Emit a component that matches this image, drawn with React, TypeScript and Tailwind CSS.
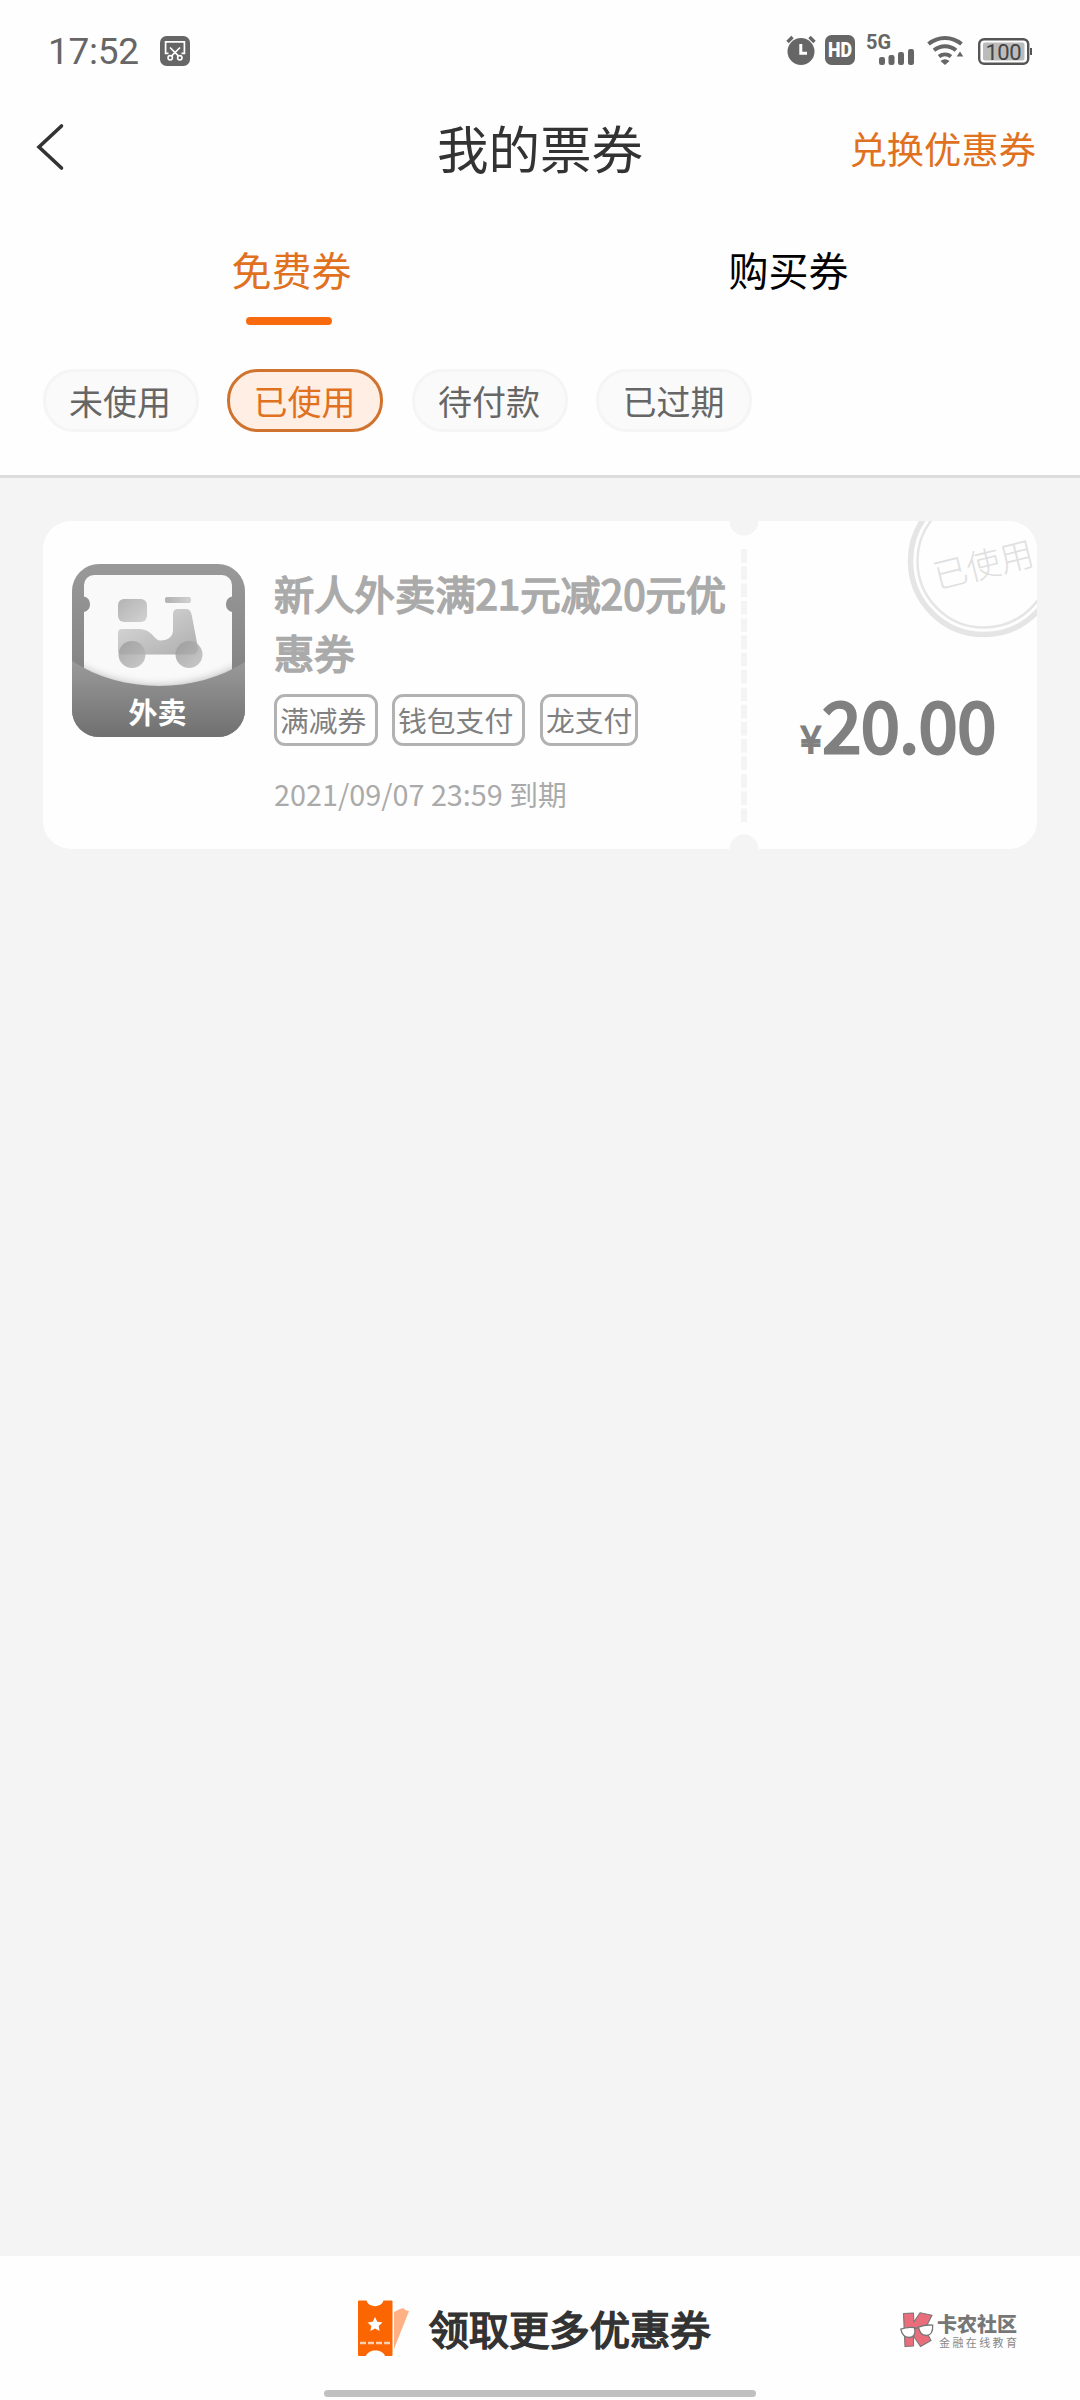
const chips = ["未使用", "已使用", "待付款", "已过期"];

function ScissorsBadge() {
  return (
    <svg width="30" height="30" viewBox="0 0 30 30" fill="none">
      <rect width="30" height="30" rx="6.5" fill="#666" />
      <path d="M8.500 17.300H5.600V5.900h18.800v11.400h-2.900" stroke="#fff" strokeWidth="1.700" />
      <path d="M10 11.500l8.600 8.600M20 11.500l-8.600 8.600" stroke="#fff" strokeWidth="1.700" />
      <circle cx="10.200" cy="21.800" r="2.200" stroke="#fff" strokeWidth="1.600" />
      <circle cx="19.800" cy="21.800" r="2.200" stroke="#fff" strokeWidth="1.600" />
    </svg>
  );
}

function StatusIcons() {
  return (
    <svg width="248" height="60" viewBox="785 22 248 60" fill="#666">
      <circle cx="801" cy="52.500" r="13.500" />
      <path d="M787.500 43l5-5M809.500 38l5 5" stroke="#666" strokeWidth="3.400" />
      <path d="M800.800 45v9.300h6.200" stroke="#fff" strokeWidth="3" fill="none" />
      <rect x="825" y="36" width="30" height="30" rx="6.500" />
      <text x="840" y="58" textAnchor="middle" fill="#fff" fontFamily="Roboto" fontWeight="900" fontSize="20" textLength="24" lengthAdjust="spacingAndGlyphs">HD</text>
      <text x="866" y="50.200" fontFamily="Roboto" fontWeight="700" fontSize="19.500" textLength="25" lengthAdjust="spacingAndGlyphs">5G</text>
      <rect x="879" y="58" width="6" height="8" rx="2.200" />
      <rect x="888.500" y="56" width="6" height="10" rx="2.200" />
      <rect x="898" y="53" width="6" height="13" rx="2.200" />
      <rect x="908" y="50" width="6" height="16" rx="2.200" />
      <g fill="none" stroke="#666" strokeWidth="4">
        <path d="M928.500 45a25.500 25.500 0 0 1 33 0" />
        <path d="M934 51.300a17 17 0 0 1 22 0" />
        <path d="M939 57.500a10 10 0 0 1 12 0" />
      </g>
      <path d="M940.500 62q4.500-3.600 9 0l-4.500 4z" />
      <path d="M960 52.500l3.300 5h-6.600z" />
      <rect x="979.200" y="40.200" width="49" height="24.600" rx="5" fill="#fff" stroke="#555" strokeWidth="2.400" />
      <rect x="983" y="43.500" width="41.500" height="18" rx="2" fill="#bbb" />
      <path d="M1030 49h2v7h-2z" fill="#555" />
      <text x="1003.500" y="60.500" textAnchor="middle" fill="#444" fontFamily="Roboto" fontSize="22" textLength="36" lengthAdjust="spacing">100</text>
    </svg>
  );
}

function TakeawayIcon() {
  return (
    <svg className="shrink-0" width="173" height="173" viewBox="0 0 173 173">
      <defs>
        <clipPath id="tile"><rect width="173" height="173" rx="27" /></clipPath>
        <linearGradient id="back" x1="0" y1="0" x2="0" y2="1">
          <stop offset="0" stopColor="#999" /><stop offset="0.6" stopColor="#858585" />
        </linearGradient>
        <linearGradient id="front" x1="0" y1="0" x2="0" y2="1">
          <stop offset="0" stopColor="#9a9a9a" /><stop offset="1" stopColor="#707070" />
        </linearGradient>
        <linearGradient id="part" x1="0" y1="0" x2="1" y2="1">
          <stop offset="0" stopColor="#b3b3b3" /><stop offset="1" stopColor="#d2d2d2" />
        </linearGradient>
        <linearGradient id="bar" x1="0" y1="0" x2="1" y2="0">
          <stop offset="0" stopColor="#b0b0b0" /><stop offset="1" stopColor="#d2d2d2" />
        </linearGradient>
        <linearGradient id="body" x1="0" y1="0" x2="1" y2="1">
          <stop offset="0" stopColor="#dcdcdc" /><stop offset="0.9" stopColor="#b2b2b2" />
        </linearGradient>
        <linearGradient id="wheel" x1="0" y1="0" x2="1" y2="1">
          <stop offset="0" stopColor="#999" /><stop offset="1" stopColor="#bdbdbd" />
        </linearGradient>
        <filter id="soft" x="-20%" y="-20%" width="140%" height="140%"><feGaussianBlur stdDeviation="4" /></filter>
      </defs>
      <g clipPath="url(#tile)">
        <rect width="173" height="173" fill="url(#back)" />
        <path d="M22 11H150a10 10 0 0 1 10 10V32.500a8 8 0 0 0 0 15.500V140H12V48a8 8 0 0 0 0-15.500V21a10 10 0 0 1 10-10z" fill="#f9f9f9" />
        <path d="M-2 98Q86 146 175 98V180H-2z" fill="#888" opacity="0.6" filter="url(#soft)" />
        <path d="M0 97C50 130 123 130 173 98V173H0z" fill="url(#front)" />
        <rect x="46" y="35" width="29" height="23" rx="6" fill="url(#part)" />
        <rect x="93" y="33" width="26" height="6" rx="2" fill="url(#bar)" />
        <path d="M50 65H66C77 65 80 71 84.500 75Q86 76.500 88 76.500C97 76.500 101 72 101 66V50Q101 45 106 45H114Q118 45 119.500 50L126 84Q126 90 120 90.500H51Q46 90.500 46 86V69Q46 65 50 65z" fill="url(#body)" />
        <g fill="url(#wheel)" opacity="0.8">
          <circle cx="60" cy="90.500" r="13.500" />
          <circle cx="117" cy="90.500" r="13.500" />
        </g>
      </g>
      <text x="85.500" y="159.500" textAnchor="middle" fill="#fff" fontFamily="Noto Sans CJK SC" fontWeight="700" fontSize="29">外卖</text>
    </svg>
  );
}

function UsedStamp() {
  return (
    <svg className="absolute top-0 right-0" width="135" height="120" viewBox="902 521 135 120">
      <g fill="none" stroke="#e5e5e5">
        <circle cx="984" cy="561" r="73.500" strokeWidth="5.500" />
        <circle cx="984" cy="561" r="66.500" strokeWidth="2.500" />
      </g>
      <text x="983.500" y="577" textAnchor="middle" fill="#e0e0e0" fontFamily="Noto Sans CJK SC" fontWeight="300" fontSize="34" transform="rotate(-14 984 565)">已使用</text>
    </svg>
  );
}

function TicketIcon() {
  return (
    <svg width="52" height="58" viewBox="359 2299 52 58">
      <path d="M395 2312l6-3q5-2 5 1l4 1-15 38z" fill="#ffb084" />
      <path d="M360 2300.500h7.500c2 7.500 15 7.500 17 0h8q1 0 1 1v53.500q0 1-1 1H386c-2-7.500-17-7.500-19 0h-7q-1 0-1-1v-53.500q0-1 1-1z" fill="#fb6602" />
      <path d="M376 2317l2.300 4.700 5.200.7-3.800 3.600.9 5.100-4.600-2.500-4.600 2.500.9-5.100-3.800-3.600 5.200-.7z" fill="#fff" />
      <path d="M361 2343h30" stroke="#ffd0b0" strokeWidth="2.500" strokeDasharray="6 2" />
    </svg>
  );
}

function CommunityLogo() {
  return (
    <div className="flex items-center">
      <svg width="35" height="37" viewBox="0 0 35 37">
        <path d="M3.500 1.500L13.500 1l.3 9L20 .8l12 2.400-7 13.800 6 11.500-10.500 6-7-10.500v10L5 34.500z" fill="#ea6d7c" stroke="#777" strokeWidth="1.100" strokeLinejoin="round" />
        <g fill="#fff" stroke="#777" strokeWidth="1.300">
          <path d="M.8 17.200q7-2.800 13.700-1.500 2 9.500-5.500 9.800-6.500 0-8.200-8.300z" />
          <path d="M18.500 15.200q7-2.800 14.200-2 .5 10-6.200 10.300-6.500.2-8-8.300z" />
        </g>
        <path d="M14.500 16.500l4-.8" stroke="#777" strokeWidth="1.300" />
      </svg>
      <div className="ml-[2px] flex flex-col">
        <span className="text-[20px] leading-[20px] font-black text-[#777]">卡农社区</span>
        <span className="mt-[3px] ml-[2px] text-[11px] leading-[11px] tracking-[2.400px] text-[#888]">金融在线教育</span>
      </div>
    </div>
  );
}

export default function App() {
  return (
    <div className="flex h-[2400px] w-[1080px] flex-col overflow-hidden bg-[#f4f4f4] font-['Noto_Sans_CJK_SC',sans-serif] whitespace-nowrap">
      <header className="flex h-[478px] shrink-0 flex-col border-b-[3px] border-[#dcdcdc] bg-[#fefefe]">
        <div className="flex h-[102px] shrink-0 items-center pr-[47px] pl-[48px]">
          <span className="pt-[1px] font-['Roboto',sans-serif] text-[37px] tracking-[-0.300px] text-[#666]">17:52</span>
          <div className="mr-auto ml-[21px]"><ScissorsBadge /></div>
          <StatusIcons />
        </div>
        <div className="grid h-[96px] shrink-0 grid-cols-3 items-center px-[36px]">
          <svg width="30" height="48" viewBox="0 0 30 48" fill="none" stroke="#333" strokeWidth="3.600" strokeLinecap="round" className="-mt-[6px]">
            <path d="M25.500 3L3 24l22.500 21" />
          </svg>
          <h1 className="-mt-[6px] text-center text-[51.500px] text-[#333]">我的票券</h1>
          <a className="-mt-[3px] pr-[8px] text-right text-[37.300px] text-[#e0711f]">兑换优惠券</a>
        </div>
        <nav className="mt-[38px] grid grid-cols-2 px-[43px] text-center text-[40px] leading-[66px]">
          <div className="flex flex-col items-center text-[#e0711f]">
            <span>免费券</span>
            <i className="mt-[15px] mr-[5px] h-[8px] w-[86px] rounded-[4px] bg-[#f96a0e]" />
          </div>
          <span className="text-black">购买券</span>
        </nav>
        <div className="mt-[44px] flex gap-[28.500px] pl-[42.500px]">
          {chips.map((label, i) => (
            <button
              key={label}
              className={
                i === 1
                  ? "h-[63px] w-[156px] rounded-[31px] border-[3px] border-[#d0732f] bg-[#ffeee4] pr-[1px] text-[34px] leading-[58px] text-[#e0711f]"
                  : "h-[63px] w-[156px] rounded-[31px] border-[3px] border-[#f5f5f5] bg-[#fafafa] pr-[1px] text-[34px] leading-[58px] text-[#666]"
              }
            >
              {label}
            </button>
          ))}
        </div>
      </header>

      <main className="flex-1 px-[43px] pt-[43px]">
        <article className="relative flex h-[328px] overflow-hidden rounded-[28px] bg-[#fefefe]">
          <div className="flex w-[697px] pt-[43px] pl-[29px]">
            <TakeawayIcon />
            <div className="ml-[29px] flex flex-col">
              <h2 className="-mt-[1px] w-[456px] text-[40.300px] leading-[59px] whitespace-normal text-[#aaa] [-webkit-text-stroke:1.700px_#aaa]">新人外卖满21元减20元优惠券</h2>
              <div className="mt-[13px] flex text-[28.800px] leading-[46px] text-[#808080]">
                <span className="h-[52px] w-[104px] rounded-[11px] border-[3px] border-[#b2b2b2] pl-[3px]">满减券</span>
                <span className="ml-[14px] h-[52px] w-[133px] rounded-[11px] border-[3px] border-[#b2b2b2] pl-[3px]">钱包支付</span>
                <span className="ml-[15px] h-[52px] w-[98px] rounded-[11px] border-[3px] border-[#b2b2b2] pl-[3px]">龙支付</span>
              </div>
              <span className="mt-[26px] text-[28.800px] leading-[44px] text-[#aaa]">2021/09/07 23:59 到期</span>
            </div>
          </div>
          <svg width="30" height="328" viewBox="728.500 521 30 328" fill="#f4f4f4" className="-ml-[11.500px] shrink-0">
            <circle cx="743.500" cy="521" r="14.500" />
            <circle cx="743.500" cy="849" r="14.500" />
            <path d="M743.500 549V823" stroke="#f4f4f4" strokeWidth="6" strokeDasharray="13.500 3.800" />
          </svg>
          <div className="flex flex-1 items-baseline justify-end pt-[150px] pr-[41px] text-[#808080]">
            <span className="text-[38px] [-webkit-text-stroke:1.800px_#808080]">¥</span>
            <span className="ml-[1px] text-[69.500px] [-webkit-text-stroke:3.200px_#808080]">20.00</span>
          </div>
          <UsedStamp />
        </article>
      </main>

      <footer className="relative flex h-[144px] shrink-0 items-center justify-center bg-[#fefefe]">
        <div className="mr-[11px] flex items-center">
          <TicketIcon />
          <span className="ml-[18px] text-[40.300px] text-[#333] [-webkit-text-stroke:1.700px_#333]">领取更多优惠券</span>
        </div>
        <div className="absolute top-[56px] left-[900px]"><CommunityLogo /></div>
        <div className="absolute bottom-[3px] left-[324px] h-[7px] w-[432px] rounded-full bg-[#c0c0c0]" />
      </footer>
    </div>
  );
}
